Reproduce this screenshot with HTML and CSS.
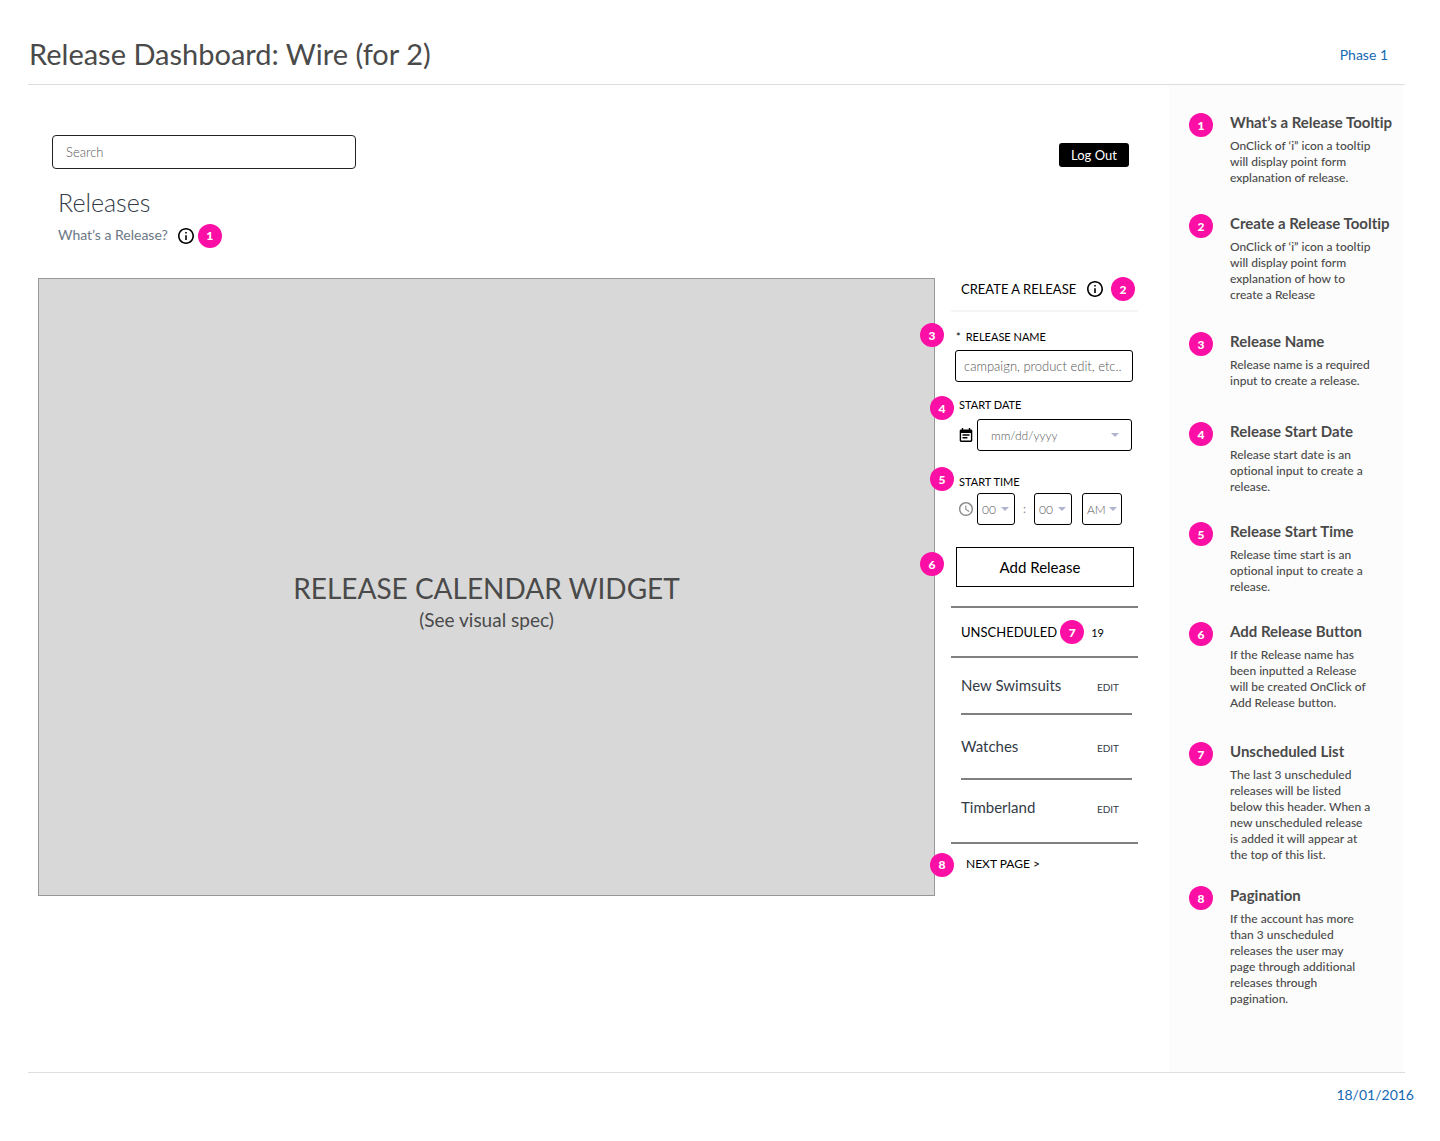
FILE: index.html
```
<!DOCTYPE html>
<html lang="en">
<head>
    <meta charset="UTF-8">
    <meta name="viewport" content="width=device-width, initial-scale=1.0">
    <title>Release Dashboard: Wire (for 2)</title>
    <link rel="stylesheet" href="styles.css">
</head>
<body>
    <header class="page-header">
        <h1>Release Dashboard: Wire (for 2)</h1>
        <span class="phase">Phase 1</span>
    </header>

    <div class="content">
        <main class="wireframe">
            <div class="toolbar">
                <input type="search" class="search" placeholder="Search" aria-label="Search">
                <button type="button" class="logout">Log Out</button>
            </div>

            <div class="intro">
                <h2>Releases</h2>
                <div class="intro-help">
                    <a href="#note-1">What’s a Release?</a>
                    <svg class="info-icon" viewBox="2 2 20 20" aria-hidden="true"><path d="M11 17h2v-6h-2v6zm1-15C6.48 2 2 6.48 2 12s4.48 10 10 10 10-4.48 10-10S17.52 2 12 2zm0 18c-4.41 0-8-3.59-8-8s3.59-8 8-8 8 3.59 8 8-3.59 8-8 8zM11 9h2V7h-2v2z"/></svg>
                    <span class="badge">1</span>
                </div>
            </div>

            <div class="workspace">
                <section class="calendar">
                    <h2>RELEASE CALENDAR WIDGET</h2>
                    <p>(See visual spec)</p>
                </section>

                <aside class="panel">
                    <div class="panel-header">
                        <h3>CREATE A RELEASE</h3>
                        <svg class="info-icon" viewBox="2 2 20 20" aria-hidden="true"><path d="M11 17h2v-6h-2v6zm1-15C6.48 2 2 6.48 2 12s4.48 10 10 10 10-4.48 10-10S17.52 2 12 2zm0 18c-4.41 0-8-3.59-8-8s3.59-8 8-8 8 3.59 8 8-3.59 8-8 8zM11 9h2V7h-2v2z"/></svg>
                        <span class="badge">2</span>
                    </div>

                    <form class="release-form">
                        <div class="field field-name">
                            <span class="badge badge-far">3</span>
                            <label for="release-name"><span class="required">*</span>RELEASE NAME</label>
                            <input type="text" id="release-name" placeholder="campaign, product edit, etc.." required>
                        </div>

                        <div class="field field-date">
                            <span class="badge badge-near">4</span>
                            <label for="start-date">START DATE</label>
                            <div class="field-row">
                                <svg class="date-icon" viewBox="3 1 18 20" aria-hidden="true"><path d="M17 10H7v2h10v-2zm2-7h-1V1h-2v2H8V1H6v2H5c-1.11 0-1.99.9-1.99 2L3 19c0 1.1.89 2 2 2h14c1.1 0 2-.9 2-2V5c0-1.1-.9-2-2-2zm0 16H5V8h14v11zm-5-5H7v2h7v-2z"/></svg>
                                <div class="select select-date">
                                    <select id="start-date"><option>mm/dd/yyyy</option></select>
                                </div>
                            </div>
                        </div>

                        <div class="field field-time">
                            <span class="badge badge-near">5</span>
                            <label for="start-hour">START TIME</label>
                            <div class="field-row">
                                <svg class="time-icon" viewBox="2 2 20 20" aria-hidden="true"><path d="M11.99 2C6.47 2 2 6.48 2 12s4.47 10 9.99 10C17.52 22 22 17.52 22 12S17.52 2 11.99 2zM12 20c-4.42 0-8-3.58-8-8s3.58-8 8-8 8 3.58 8 8-3.58 8-8 8zm.5-13H11v6l5.25 3.15.75-1.23-4.5-2.67z"/></svg>
                                <div class="select select-time">
                                    <select id="start-hour"><option>00</option></select>
                                </div>
                                <span class="colon">:</span>
                                <div class="select select-time">
                                    <select aria-label="Minutes"><option>00</option></select>
                                </div>
                                <div class="select select-period">
                                    <select aria-label="AM or PM"><option>AM</option><option>PM</option></select>
                                </div>
                            </div>
                        </div>

                        <div class="field field-submit">
                            <span class="badge badge-far">6</span>
                            <button type="button" class="add-release">Add Release</button>
                        </div>
                    </form>

                    <div class="list-header">
                        <h3>UNSCHEDULED</h3>
                        <span class="badge">7</span>
                        <span class="count">19</span>
                    </div>
                    <ul class="release-list">
                        <li>New Swimsuits <a href="#">EDIT</a></li>
                        <li>Watches <a href="#">EDIT</a></li>
                        <li>Timberland <a href="#">EDIT</a></li>
                    </ul>
                    <div class="pagination">
                        <span class="badge badge-near">8</span>
                        <a href="#">NEXT PAGE &gt;</a>
                    </div>
                </aside>
            </div>
        </main>

        <ol class="notes">
            <li id="note-1">
                <span class="badge">1</span>
                <div>
                    <h3>What’s a Release Tooltip</h3>
                    <p>OnClick of ‘i” icon a tooltip<br>will display point form<br>explanation of release.</p>
                </div>
            </li>
            <li>
                <span class="badge">2</span>
                <div>
                    <h3>Create a Release Tooltip</h3>
                    <p>OnClick of ‘i” icon a tooltip<br>will display point form<br>explanation of how to<br>create a Release</p>
                </div>
            </li>
            <li>
                <span class="badge">3</span>
                <div>
                    <h3>Release Name</h3>
                    <p>Release name is a required<br>input to create a release.</p>
                </div>
            </li>
            <li>
                <span class="badge">4</span>
                <div>
                    <h3>Release Start Date</h3>
                    <p>Release start date is an<br>optional input to create a<br>release.</p>
                </div>
            </li>
            <li>
                <span class="badge">5</span>
                <div>
                    <h3>Release Start Time</h3>
                    <p>Release time start is an<br>optional input to create a<br>release.</p>
                </div>
            </li>
            <li>
                <span class="badge">6</span>
                <div>
                    <h3>Add Release Button</h3>
                    <p>If the Release name has<br>been inputted a Release<br>will be created OnClick of<br>Add Release button.</p>
                </div>
            </li>
            <li>
                <span class="badge">7</span>
                <div>
                    <h3>Unscheduled List</h3>
                    <p>The last 3 unscheduled<br>releases will be listed<br>below this header. When a<br>new unscheduled release<br>is added it will appear at<br>the top of this list.</p>
                </div>
            </li>
            <li>
                <span class="badge">8</span>
                <div>
                    <h3>Pagination</h3>
                    <p>If the account has more<br>than 3 unscheduled<br>releases the user may<br>page through additional<br>releases through<br>pagination.</p>
                </div>
            </li>
        </ol>
    </div>

    <footer class="page-footer">18/01/2016</footer>
</body>
</html>
```
FILE: styles.css
```
* {
    box-sizing: border-box;
}
body {
    font-family: Lato, "Liberation Sans", sans-serif;
    font-size: 14px;
    font-variant-ligatures: none;
    margin: 0;
    min-height: 100vh;
    display: flex;
    flex-direction: column;
    background-color: #fff;
    color: #4a4a4a;
}
h1, h2, h3, p, ul, ol {
    margin: 0;
    padding: 0;
    font-weight: 400;
}
ul, ol {
    list-style: none;
}
a {
    color: inherit;
    text-decoration: none;
}
input, select, button {
    font-family: inherit;
    margin: 0;
}
.page-header {
    display: flex;
    align-items: center;
    justify-content: space-between;
    margin: 0 35px 0 28px;
    padding: 34px 17px 10px 1px;
    border-bottom: 1px solid #dcdee2;
}
.page-header h1 {
    font-size: 29px;
    line-height: 40px;
}
.phase, .page-footer {
    font-size: 14px;
    color: #1569b3;
}
.content {
    flex: 1;
    display: flex;
    margin: 0 35px 0 28px;
    padding-right: 2px;
    border-bottom: 1px solid #dcdee2;
}
.wireframe {
    flex: 1;
    padding: 50px 31px 0 10px;
}
.page-footer {
    padding: 12px 26px 36px;
    line-height: 20px;
    text-align: right;
}

/* Numbered markers */
.badge {
    display: flex;
    align-items: center;
    justify-content: center;
    flex: none;
    width: 24px;
    height: 24px;
    border-radius: 50%;
    background-color: #fc0fa4;
    color: #fff;
    font-size: 12px;
    font-weight: 900;
}
.badge-near, .badge-far {
    position: absolute;
    left: -21px;
    z-index: 1;
}

/* Search and log out */
.toolbar {
    display: flex;
    align-items: center;
    justify-content: space-between;
    padding: 0 9px 0 14px;
}
.search {
    width: 304px;
    height: 34px;
    padding: 0 13px;
    border: 1px solid #222;
    border-radius: 4px;
    font-size: 13px;
    font-weight: 300;
}
::placeholder {
    color: #555;
    opacity: 1;
}
.logout {
    width: 70px;
    height: 24px;
    margin-top: 6px;
    padding: 0;
    border: none;
    border-radius: 3px;
    background-color: #000;
    color: #fff;
    font-size: 13px;
}
.intro {
    padding: 17px 20px 30px;
}
.intro h2 {
    font-size: 25px;
    font-weight: 300;
    line-height: 32px;
    color: #333b47;
}
.intro-help {
    display: flex;
    align-items: center;
    padding-top: 6px;
    line-height: 20px;
    color: #6b7785;
}
.intro-help a {
    padding-bottom: 2px;
}
.intro-help .info-icon {
    margin: 0 4px 0 10px;
}
.info-icon {
    width: 16px;
    height: 16px;
    color: #000;
}

/* Calendar and side panel */
.workspace {
    display: flex;
    align-items: flex-start;
    gap: 16px;
}
.calendar {
    flex: 1;
    min-height: 618px;
    display: flex;
    flex-direction: column;
    align-items: center;
    justify-content: center;
    padding-top: 30px;
    border: 1px solid #979797;
    background-color: #d8d8d8;
}
.calendar h2 {
    font-size: 28px;
    line-height: 36px;
}
.calendar p {
    font-size: 19px;
    line-height: 28px;
}
.panel {
    flex: none;
    width: 187px;
    color: #000;
}
.panel h3 {
    font-size: 13px;
}
.panel-header {
    display: flex;
    align-items: center;
    height: 34px;
    padding: 0 3px 10px 10px;
    border-bottom: 2px solid #f5f5f5;
}
.panel-header .badge {
    margin-left: 8px;
}
.panel-header .info-icon {
    margin-left: auto;
}
.release-form {
    padding: 17px 5px 19px 4px;
}
.field {
    position: relative;
    display: flex;
    flex-direction: column;
}
.field label {
    font-size: 11px;
    line-height: 16px;
}
.required {
    margin: 0 5px 0 1px;
}
.field .badge-near {
    left: -25px;
}
.field .badge-far {
    left: -35px;
}
.field input, .select select {
    appearance: none;
    width: 100%;
    height: 32px;
    border: 1px solid #000;
    border-radius: 3px;
    background-color: #fff;
    font-size: 12px;
    font-weight: 300;
}
.field input {
    margin-top: 5px;
    padding: 0 8px;
    font-size: 13px;
}
.field-name .badge {
    top: -6px;
}
.field-date {
    padding: 15px 1px 0 4px;
}
.field-date .badge {
    top: 14px;
}
.field-date .field-row {
    margin-top: 6px;
}
.field-time {
    padding: 23px 1px 0 4px;
}
.field-time .badge {
    top: 16px;
}
.field-time .field-row {
    margin-top: 3px;
}
.field-row {
    display: flex;
    align-items: center;
}
.date-icon, .time-icon {
    width: 14px;
    height: 14px;
    margin-right: 4px;
}
.time-icon {
    fill: #888;
}
.select {
    position: relative;
}
.select select {
    padding: 0 4px;
    color: #555;
}
.select::after {
    content: "";
    position: absolute;
    top: 14px;
    right: 6px;
    border-top: 4px solid #b0b4cf;
    border-left: 4px solid transparent;
    border-right: 4px solid transparent;
    pointer-events: none;
}
.select-date {
    flex: 1;
}
.select-date select {
    padding: 0 13px;
}
.select-date::after {
    right: 13px;
}
.select-time {
    width: 38px;
}
.select-period {
    width: 40px;
    margin-left: 10px;
}
.select-period::after {
    right: 5px;
}
.colon {
    width: 19px;
    padding-bottom: 2px;
    text-align: center;
    font-size: 12px;
    color: #888;
}
.field-submit {
    padding-top: 22px;
}
.field-submit .badge {
    top: 27px;
}
.add-release {
    height: 40px;
    margin: 0 -1px 0 1px;
    padding: 0 10px 0 0;
    border: 1px solid #000;
    background-color: #fff;
    font-size: 15px;
}

/* Unscheduled releases */
.list-header {
    display: flex;
    align-items: center;
    height: 52px;
    padding-left: 10px;
    border-top: 2px solid #808080;
    border-bottom: 2px solid #808080;
}
.list-header .badge {
    margin: 0 7px 0 3px;
}
.count {
    font-size: 11px;
}
.release-list {
    display: grid;
    grid-template-rows: 57px 65px 62px;
    padding: 0 6px 0 10px;
    border-bottom: 2px solid #808080;
}
.release-list li {
    display: flex;
    flex-wrap: wrap;
    align-content: center;
    align-items: baseline;
    justify-content: space-between;
    padding-right: 13px;
    border-bottom: 2px solid #808080;
    font-size: 15px;
    line-height: 22px;
    color: #333b47;
}
.release-list li:last-child {
    padding-bottom: 6px;
    border-bottom: none;
}
.release-list a {
    font-size: 10px;
}
.pagination {
    position: relative;
    padding: 8px 15px;
    font-size: 12px;
    line-height: 24px;
}
.pagination .badge {
    top: 9px;
}

/* Notes column */
.notes {
    flex: none;
    width: 234px;
    display: grid;
    grid-template-rows: 101px 118px 90px 100px 100px 120px 144px auto;
    padding: 28px 0 57px 20px;
    background-color: #fcfcfc;
}
.notes li {
    display: flex;
    gap: 17px;
    white-space: nowrap;
}
.notes h3 {
    font-size: 15px;
    font-weight: 700;
    line-height: 18px;
}
.notes p {
    margin-top: 7px;
    font-size: 12px;
    font-weight: 500;
    line-height: 16px;
}
```
